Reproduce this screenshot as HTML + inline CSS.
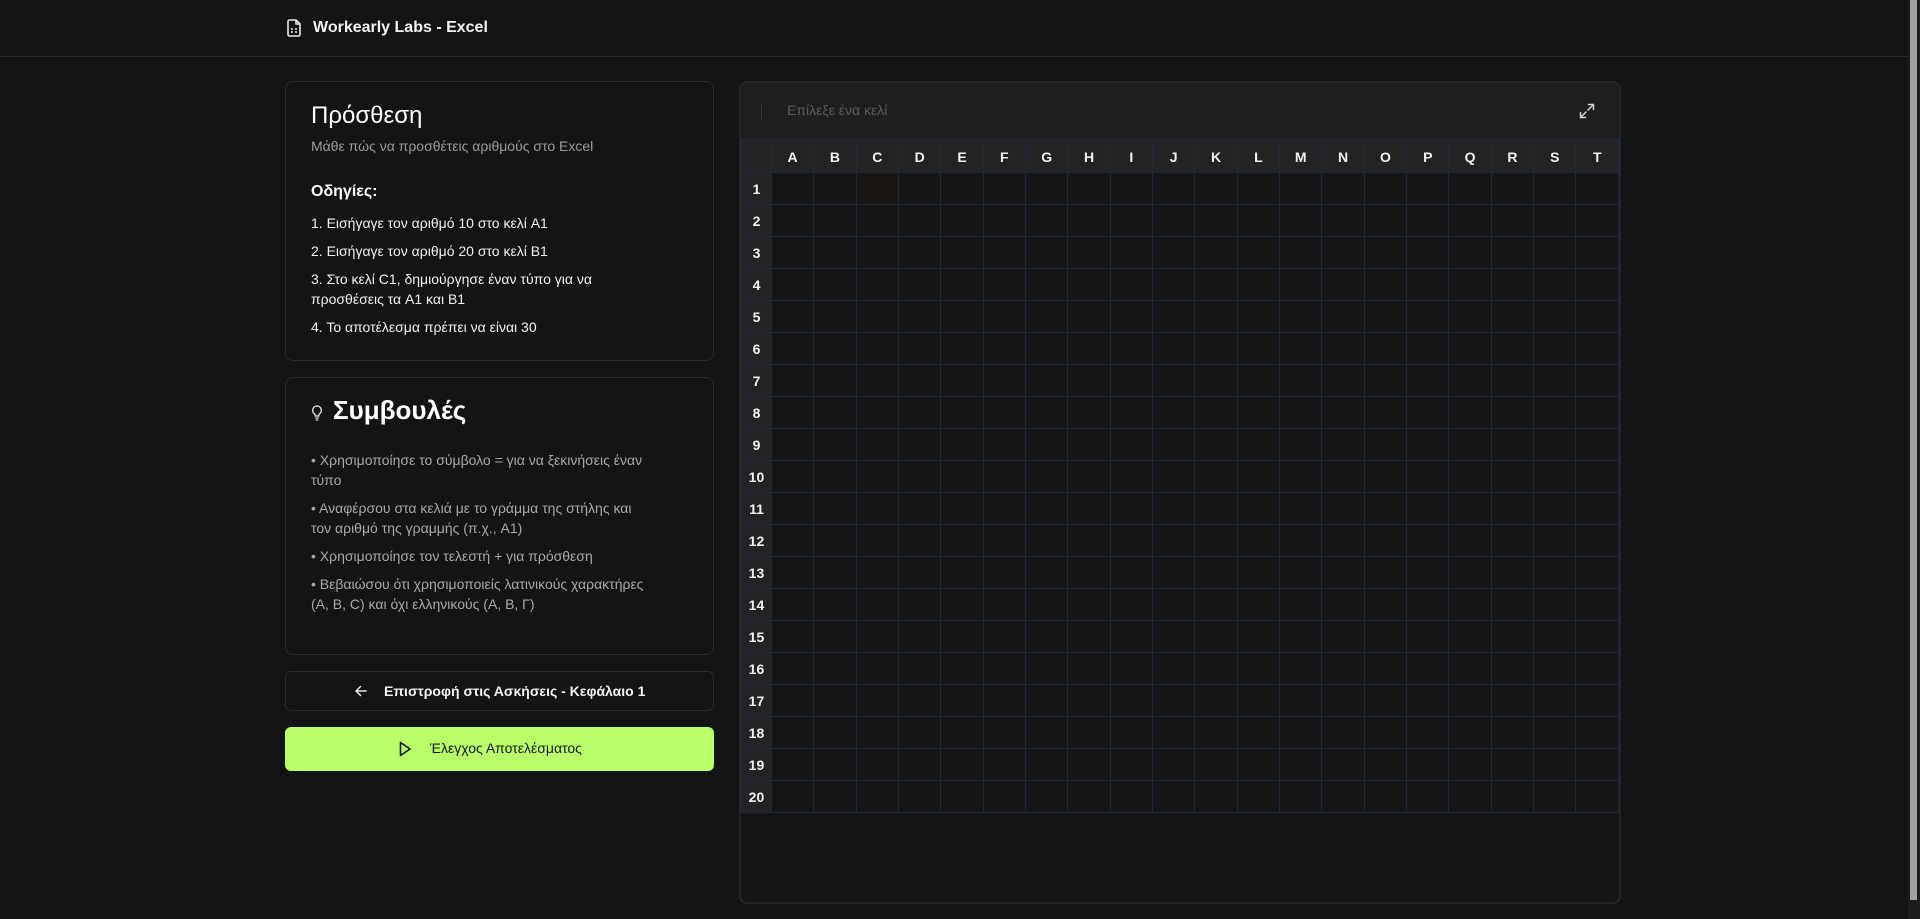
<!DOCTYPE html>
<html><head><meta charset="utf-8"><style>
*{box-sizing:border-box;margin:0;padding:0}
body{width:1920px;height:919px;background:#141414;font-family:"Liberation Sans","Noto Sans CJK SC",sans-serif;color:#fff;overflow:hidden;position:relative}
.hdr{position:absolute;left:0;top:0;width:1908px;height:57px;border-bottom:1px solid #262626}
.hdr .t{position:absolute;left:313px;top:19px;font-size:16px;font-weight:bold;color:#f2f2f2}
.hdr svg{position:absolute;left:286px;top:19px}
.sb{position:absolute;right:0;top:0;width:12px;height:919px;background:#1c1c1c}
.sb div{position:absolute;left:2px;top:0;width:7px;height:900px;background:#a0a0a0}
.card{position:absolute;left:285px;width:429px;border:1px solid #2a2a2a;border-radius:8px;background:#141414}
.c1{top:81px;height:280px}
.c2{top:377px;height:278px}
h1{position:absolute;left:25px;font-size:24px;font-weight:normal;color:#fff}
.sub{position:absolute;left:25px;top:56px;font-size:14px;color:#9a9a9a}
.oh{position:absolute;left:25px;top:101px;font-size:16px;font-weight:bold}
.li{position:absolute;left:25px;font-size:14px;color:#f0f0f0;line-height:20px}
.tp{position:absolute;left:25px;font-size:14px;color:#a8a8a8;line-height:20px;width:336px}
.back{position:absolute;left:285px;top:671px;width:429px;height:40px;border:1px solid #2a2a2a;border-radius:6px;font-size:14px;font-weight:bold;color:#f2f2f2}
.green{position:absolute;left:285px;top:727px;width:429px;height:44px;background:#b8ff6a;border-radius:6px;font-size:14px;color:#151515}
.panel{position:absolute;left:739px;top:81px;width:882px;height:823px;border:2px solid #22262c;border-radius:8px;background:#151515;overflow:hidden}
.tb{height:57px;background:#1e1e1e;border-bottom:1px solid #1f2a3a;position:relative}
.tb .ph{position:absolute;left:46px;top:19px;font-size:14px;color:#5a5a5a}
.tb .bar{position:absolute;left:20px;top:21px;width:1px;height:16px;background:#2a3340}
table{border-collapse:collapse;table-layout:fixed;position:absolute;left:0;top:57px}
td,th{border:1px solid #1e2836;height:32px;font-size:14px;font-weight:bold;text-align:center;color:#f2f2f2}
th{background:#232323;height:32px}
td.r{background:#232323}
td{background:#151515}
</style></head><body>
<div class="hdr">
<svg width="16" height="18" viewBox="0 0 16 18" fill="none" stroke="#e8e8e8" stroke-width="1.6" stroke-linejoin="round"><path d="M2 2.5a1.5 1.5 0 0 1 1.5-1.5H10l4 4v10.5a1.5 1.5 0 0 1-1.5 1.5h-9A1.5 1.5 0 0 1 2 15.5z"/><path d="M10 1v4h4"/><path d="M5 10h2M9 10h2M5 13h2M9 13h2"/></svg>
<div class="t">Workearly Labs - Excel</div></div>
<div class="sb"><div></div></div>

<div class="card c1">
<h1 style="top:20px">Πρόσθεση</h1>
<div class="sub">Μάθε πώς να προσθέτεις αριθμούς στο Excel</div>
<div class="oh">Οδηγίες:</div>
<div class="li" style="top:131px">1. Εισήγαγε τον αριθμό 10 στο κελί A1</div>
<div class="li" style="top:159px">2. Εισήγαγε τον αριθμό 20 στο κελί B1</div>
<div class="li" style="top:187px">3. Στο κελί C1, δημιούργησε έναν τύπο για να<br>προσθέσεις τα A1 και B1</div>
<div class="li" style="top:235px">4. Το αποτέλεσμα πρέπει να είναι 30</div>
</div>

<div class="card c2">
<svg style="position:absolute;left:25px;top:27px" width="12" height="16" viewBox="0 0 12 16" fill="none" stroke="#e8e8e8" stroke-width="1.3"><path d="M6 1a4.3 4.3 0 0 0-2.6 7.7c.5.4.8 1 .8 1.6V11h3.6v-.7c0-.6.3-1.2.8-1.6A4.3 4.3 0 0 0 6 1z"/><path d="M4.3 13h3.4M4.8 15h2.4"/></svg>
<h1 style="top:17px;left:47px;font-weight:bold;font-size:26px">Συμβουλές</h1>
<div class="tp" style="top:72px">• Χρησιμοποίησε το σύμβολο = για να ξεκινήσεις έναν τύπο</div>
<div class="tp" style="top:120px">• Αναφέρσου στα κελιά με το γράμμα της στήλης και τον αριθμό της γραμμής (π.χ., A1)</div>
<div class="tp" style="top:168px">• Χρησιμοποίησε τον τελεστή + για πρόσθεση</div>
<div class="tp" style="top:196px">• Βεβαιώσου ότι χρησιμοποιείς λατινικούς χαρακτήρες (A, B, C) και όχι ελληνικούς (Α, Β, Γ)</div>
</div>

<div class="back">
<svg style="position:absolute;left:68px;top:12px" width="14" height="14" viewBox="0 0 14 14" fill="none" stroke="#e8e8e8" stroke-width="1.5" stroke-linecap="round" stroke-linejoin="round"><path d="M12 7H2M6.5 2.5 2 7l4.5 4.5"/></svg>
<span style="position:absolute;left:98px;top:11px">Επιστροφή στις Ασκήσεις - Κεφάλαιο 1</span></div>
<div class="green">
<svg style="position:absolute;left:114px;top:14px" width="12" height="16" viewBox="0 0 12 16" fill="none" stroke="#151515" stroke-width="1.6" stroke-linejoin="round"><path d="M1.5 1.5v13L11 8z"/></svg>
<span style="position:absolute;left:145px;top:13px">Έλεγχος Αποτελέσματος</span></div>

<div class="panel">
<div class="tb"><div class="bar"></div><div class="ph">Επίλεξε ένα κελί</div>
<svg style="position:absolute;right:24px;top:20px" width="16" height="16" viewBox="0 0 16 16" fill="none" stroke="#d0d0d0" stroke-width="1.5" stroke-linecap="round"><path d="M9.5 1.5h5v5M14.5 1.5 9 7M6.5 14.5h-5v-5M1.5 14.5 7 9"/></svg>
</div>
<table id="g"></table>
</div>
<script>
var c="ABCDEFGHIJKLMNOPQRST",h='<colgroup><col style="width:30px">';
for(var i=0;i<20;i++)h+='<col style="width:42.5px">';
h+='</colgroup><tr><th></th>';
for(i=0;i<20;i++)h+='<th>'+c[i]+'</th>';
h+='</tr>';
for(var r=1;r<=20;r++){h+='<tr><td class="r">'+r+'</td>';for(i=0;i<20;i++)h+='<td'+(r==1&&i==2?' style="background:#191512"':'')+'></td>';h+='</tr>';}
document.getElementById('g').innerHTML=h;
</script>
</body></html>
